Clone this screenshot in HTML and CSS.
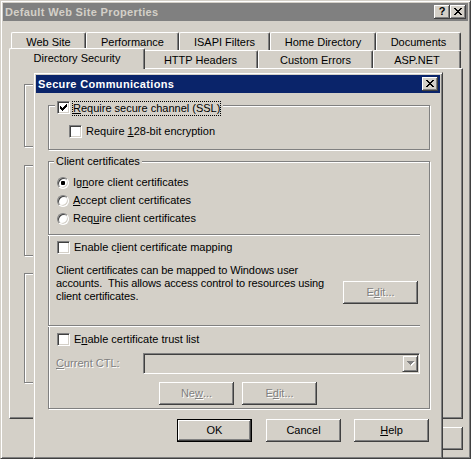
FILE: index.html
```html
<!DOCTYPE html>
<html>
<head>
<meta charset="utf-8">
<title>Default Web Site Properties</title>
<link rel="stylesheet" href="styles.css">
</head>
<body>
<div class="desk">
  <div class="win parent">
    <div class="titlebar inactive">
      <span class="title-text">Default Web Site Properties</span>
      <div class="cap-btns">
        <span class="cap-btn help-glyph">?</span>
        <span class="cap-btn"><svg class="xglyph" width="8" height="7" viewBox="0 0 8 7" shape-rendering="crispEdges"><path d="M0 0h2v1H0zM6 0h2v1H6zM1 1h2v1H1zM5 1h2v1H5zM2 2h4v1H2zM3 3h2v1H3zM2 4h4v1H2zM1 5h2v1H1zM5 5h2v1H5zM0 6h2v1H0zM6 6h2v1H6z" fill="#000"/></svg></span>
      </div>
    </div>
    <div class="pbody">
      <div class="tabstrip">
        <div class="tabrow">
          <div class="tab w-web">Web Site</div>
          <div class="tab w-perf">Performance</div>
          <div class="tab w-isapi">ISAPI Filters</div>
          <div class="tab w-home">Home Directory</div>
          <div class="tab w-docs">Documents</div>
        </div>
        <div class="tabrow">
          <div class="tab sel w-dir">Directory Security</div>
          <div class="tab w-http">HTTP Headers</div>
          <div class="tab w-err">Custom Errors</div>
          <div class="tab w-asp">ASP.NET</div>
        </div>
      </div>
      <div class="panel">
        <div class="bgroup bg1"></div>
        <div class="bgroup bg2"></div>
        <div class="bgroup bg3"></div>
      </div>
      <div class="pbuttons">
        <span class="btn">OK</span>
        <span class="btn">Cancel</span>
        <span class="btn">Apply</span>
        <span class="btn">Help</span>
      </div>
    </div>
  </div>

  <div class="win child">
    <div class="titlebar active">
      <span class="title-text">Secure Communications</span>
      <div class="cap-btns">
        <span class="cap-btn"><svg class="xglyph" width="8" height="7" viewBox="0 0 8 7" shape-rendering="crispEdges"><path d="M0 0h2v1H0zM6 0h2v1H6zM1 1h2v1H1zM5 1h2v1H5zM2 2h4v1H2zM3 3h2v1H3zM2 4h4v1H2zM1 5h2v1H1zM5 5h2v1H5zM0 6h2v1H0zM6 6h2v1H6z" fill="#000"/></svg></span>
      </div>
    </div>
    <div class="dlg-body">
      <div class="group g-ssl">
        <div class="gtitle gtitle-cb">
          <span class="cb"><svg width="11" height="11" viewBox="0 0 11 11" shape-rendering="crispEdges"><path d="M2 4h1v3H2zM3 5h1v3H3zM4 6h1v3H4zM5 5h1v3H5zM6 4h1v3H6zM7 3h1v3H7zM8 2h1v3H8z" fill="#000"/></svg></span>
          <span class="focus-label"><u>R</u>equire secure channel (SSL)</span>
        </div>
        <div class="row row-indent2 r-128">
          <span class="cb"></span>
          <span class="lbl">Require <u>1</u>28-bit encryption</span>
        </div>
      </div>

      <div class="group g-client">
        <div class="gtitle gtitle-text">Client certificates</div>
        <div class="row row-indent r-radio1">
          <span class="rb"><span class="dot"></span></span>
          <span class="lbl">Ig<u>n</u>ore client certificates</span>
        </div>
        <div class="row row-indent r-radio">
          <span class="rb"></span>
          <span class="lbl"><u>A</u>ccept client certificates</span>
        </div>
        <div class="row row-indent r-radio">
          <span class="rb"></span>
          <span class="lbl">Req<u>u</u>ire client certificates</span>
        </div>
        <div class="sep sep1"></div>
        <div class="row row-indent r-map">
          <span class="cb"></span>
          <span class="lbl">Enable c<u>l</u>ient certificate mapping</span>
        </div>
        <div class="map-row">
          <p class="desc">Client certificates can be mapped to Windows user<br>accounts.&nbsp; This allows access control to resources using<br>client certificates.</p>
          <span class="btn disabled map-edit">E<u>d</u>it...</span>
        </div>
        <div class="sep sep2"></div>
        <div class="row row-indent r-ctl">
          <span class="cb"></span>
          <span class="lbl">E<u>n</u>able certificate trust list</span>
        </div>
        <div class="ctl-row">
          <span class="ctl-label disabled-text"><u>C</u>urrent CTL:</span>
          <div class="combo">
            <span class="combo-btn"><svg width="8" height="5" viewBox="0 0 8 5" shape-rendering="crispEdges"><path transform="translate(1 1)" d="M0 0h7v1H0zM1 1h5v1H1zM2 2h3v1H2zM3 3h1v1H3z" fill="#fff"/><path d="M0 0h7v1H0zM1 1h5v1H1zM2 2h3v1H2zM3 3h1v1H3z" fill="#808080"/></svg></span>
          </div>
        </div>
        <div class="trust-btns">
          <span class="btn disabled">Ne<u>w</u>...</span>
          <span class="btn disabled">E<u>d</u>it...</span>
        </div>
      </div>

      <div class="dlg-buttons">
        <span class="btn default b-ok">OK</span>
        <span class="btn b-cancel">Cancel</span>
        <span class="btn"><u>H</u>elp</span>
      </div>
    </div>
  </div>
</div>
</body>
</html>
```

FILE: styles.css
```css
* { box-sizing: border-box; }
html, body { margin: 0; padding: 0; }
body {
  background: #d4d0c8;
  font-family: "Liberation Sans", Arial, sans-serif;
  font-size: 11px;
  color: #000;
}
u { text-decoration: underline; text-underline-offset: 1px; }

.desk { position: relative; width: 471px; height: 459px; overflow: hidden; }

/* window frames */
.win {
  background: #d4d0c8;
  border: 1px solid;
  border-color: #d4d0c8 #404040 #404040 #d4d0c8;
  box-shadow: inset 1px 1px #fff, inset -1px -1px #808080;
  padding: 2px;
  display: flex;
  flex-direction: column;
}
.parent { width: 471px; height: 459px; }
.child { position: absolute; left: 33px; top: 72px; width: 410px; height: 387px; }

.titlebar {
  flex: none;
  height: 18px;
  display: flex;
  align-items: center;
  justify-content: space-between;
  padding-left: 2px;
  font-weight: bold;
  line-height: 18px;
}
.titlebar.inactive { background: #808080; color: #d4d0c8; }
.titlebar.active { background: #0a246a; color: #fff; }
.title-text { white-space: nowrap; letter-spacing: 0.35px; }

.cap-btns { display: flex; margin-right: 2px; }
.cap-btn {
  width: 16px;
  height: 14px;
  background: #d4d0c8;
  box-shadow: inset -1px -1px #404040, inset 1px 1px #fff, inset -2px -2px #808080;
  display: flex;
  justify-content: center;
  align-items: flex-start;
  padding-top: 3px;
  color: #000;
}
.xglyph { display: block; }
.help-glyph {
  font-weight: bold;
  font-size: 11px;
  line-height: 11px;
  padding-top: 1px;
}

/* parent body */
.pbody { display: flex; flex-direction: column; padding: 11px 5px 0 6px; }
.tabstrip { width: 454px; padding: 0 2px; }
.tabrow { display: flex; height: 18px; }
.tab {
  flex: none;
  height: 18px;
  background: #d4d0c8;
  border: 1px solid #fff;
  border-bottom: none;
  border-right-color: #404040;
  border-radius: 2px 2px 0 0;
  box-shadow: inset -1px 0 #808080;
  text-align: center;
  line-height: 18px;
  white-space: nowrap;
}
.tab.sel {
  height: 21px;
  margin: -2px -2px -1px;
  line-height: 18px;
  position: relative;
  z-index: 2;
}
.w-web { width: 75px; }
.w-perf { width: 93px; }
.w-isapi { width: 91px; }
.w-home { width: 106px; }
.w-docs { width: 85px; }
.w-dir { width: 136px; }
.w-http { width: 115px; }
.w-err { width: 115px; }
.w-asp { width: 88px; }

.panel {
  width: 454px;
  height: 351px;
  border: 1px solid;
  border-color: #fff #404040 #404040 #fff;
  box-shadow: inset -1px -1px #808080;
  padding-left: 14px;
  display: flex;
  flex-direction: column;
}
.bgroup {
  width: 410px;
  border: 1px solid #808080;
  box-shadow: inset 1px 1px #fff, 1px 1px #fff;
}
.bg1 { margin-top: 15px; height: 63px; }
.bg2 { margin-top: 18px; height: 91px; }
.bg3 { margin-top: 17px; height: 110px; }

.pbuttons { display: flex; justify-content: flex-end; gap: 6px; margin-top: 8px; }

/* buttons */
.btn {
  flex: none;
  width: 75px;
  height: 23px;
  display: flex;
  align-items: center;
  justify-content: center;
  background: #d4d0c8;
  box-shadow: inset -1px -1px #404040, inset 1px 1px #fff, inset -2px -2px #808080;
  white-space: nowrap;
  padding-bottom: 1px;
}
.btn.default {
  border: 1px solid #000;
}
.btn.disabled, .disabled-text {
  color: #808080;
  text-shadow: 1px 1px 0 #fff;
}

/* child dialog */
.dlg-body { display: flex; flex-direction: column; padding: 12px 10px 0 12px; }

.group {
  display: flex;
  flex-direction: column;
  border: 1px solid #808080;
  box-shadow: inset 1px 1px #fff, 1px 1px #fff;
}
.g-ssl { padding-bottom: 11px; }
.g-client { margin-top: 11px; padding-bottom: 3px; }

.gtitle {
  align-self: flex-start;
  background: #d4d0c8;
  padding: 0 2px;
  white-space: nowrap;
}
.gtitle-cb {
  display: flex;
  align-items: flex-start;
  margin: -5px 0 0 6px;
}
.gtitle-cb .cb { margin-right: 2px; }
.focus-label {
  border: 1px dotted #000;
  line-height: 13px;
  padding: 0;
}
.gtitle-text {
  margin: -7px 0 0 5px;
  line-height: 13px;
}

.row { display: flex; align-items: center; height: 13px; white-space: nowrap; }
.row-indent { margin-left: 8px; }
.row-indent2 { margin-left: 20px; }
.lbl { line-height: 13px; }
.row .cb, .row .rb { margin-right: 4px; }
.r-128 { margin-top: 9px; }
.r-radio1 { margin-top: 8px; }
.r-radio { margin-top: 5px; }
.r-map { margin-top: 5px; }
.r-ctl { margin-top: 6px; }

.cb {
  flex: none;
  width: 13px;
  height: 13px;
  background: #fff;
  border: 1px solid;
  border-color: #808080 #fff #fff #808080;
  box-shadow: inset 1px 1px #404040, inset -1px -1px #d4d0c8;
  display: block;
}
.cb svg { display: block; }

.rb {
  flex: none;
  width: 12px;
  height: 12px;
  border-radius: 50%;
  background: #fff;
  border: 1px solid;
  border-color: #808080 #fff #fff #808080;
  box-shadow: inset 1px 1px #404040, inset -1px -1px #d4d0c8;
  display: flex;
  align-items: center;
  justify-content: center;
}
.dot { width: 4px; height: 4px; border-radius: 1px; background: #000; }

.sep {
  width: 372px;
  height: 2px;
  margin-left: -1px;
  border-top: 1px solid #808080;
  border-bottom: 1px solid #fff;
}
.sep1 { margin-top: 9px; }
.sep2 { margin-top: 21px; }

.map-row { display: flex; justify-content: space-between; align-items: flex-start; margin-top: 10px; }
.desc { margin: 0 0 0 7px; line-height: 13px; white-space: nowrap; letter-spacing: -0.1px; }
.map-edit { margin-top: 17px; margin-right: 11px; }

.ctl-row { display: flex; align-items: center; margin: 7px 0 0 7px; }
.ctl-label { width: 87px; flex: none; line-height: 13px; }
.combo {
  width: 277px;
  height: 21px;
  background: #d4d0c8;
  border: 1px solid;
  border-color: #808080 #fff #fff #808080;
  box-shadow: inset 1px 1px #404040, inset -1px -1px #d4d0c8;
  padding: 1px;
  display: flex;
  justify-content: flex-end;
}
.combo-btn {
  width: 16px;
  height: 17px;
  background: #d4d0c8;
  border: 1px solid;
  border-color: #d4d0c8 #404040 #404040 #d4d0c8;
  box-shadow: inset 1px 1px #fff, inset -1px -1px #808080;
  display: flex;
  align-items: center;
  justify-content: center;
}
.combo-btn svg { display: block; margin-left: 1px; }

.trust-btns { display: flex; justify-content: center; gap: 8px; margin-top: 8px; padding-right: 2px; }

.dlg-buttons { display: flex; justify-content: flex-end; margin-top: 10px; padding-right: 1px; }
.b-ok { margin-right: 14px; }
.b-cancel { margin-right: 13px; }
```
